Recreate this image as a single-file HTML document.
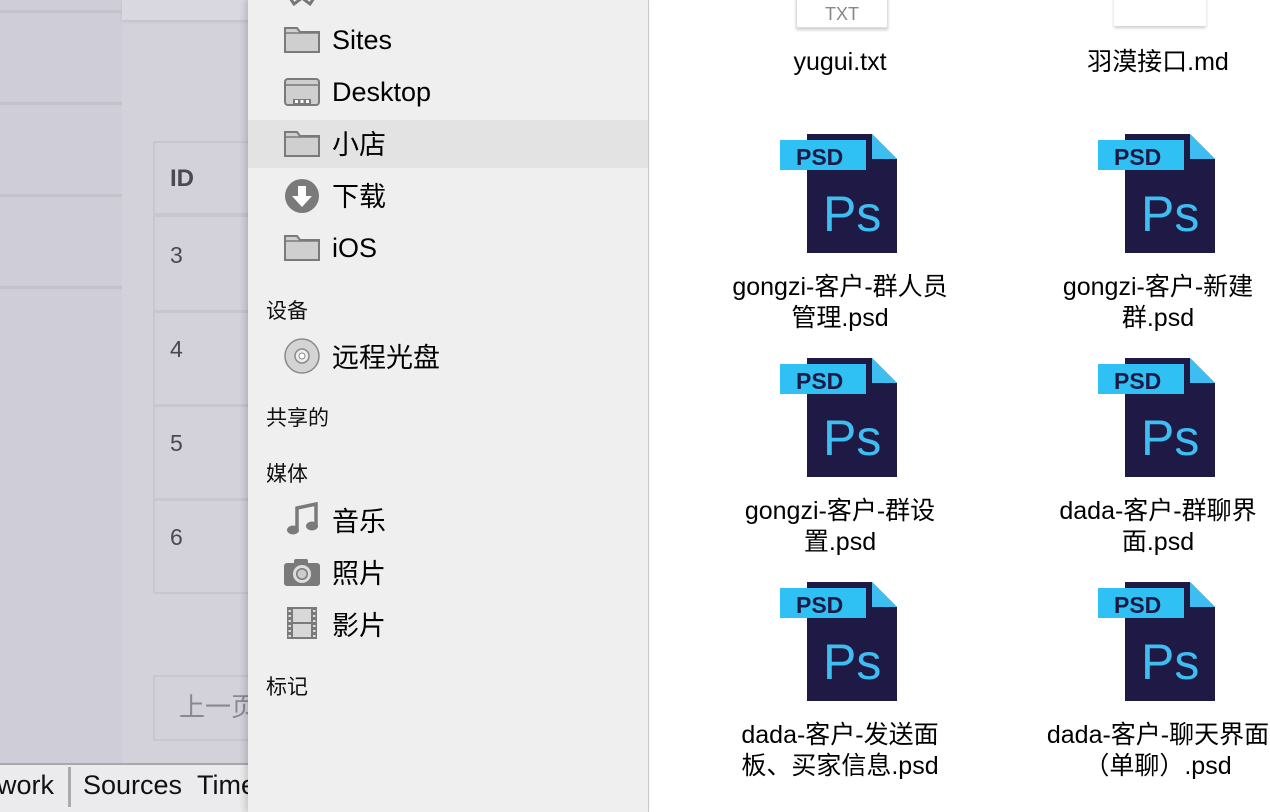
<!DOCTYPE html>
<html><head><meta charset="utf-8"><style>
*{margin:0;padding:0;box-sizing:border-box}
body{width:1270px;height:812px;overflow:hidden;position:relative;background:#fff;font-family:"Liberation Sans","Noto Sans CJK SC",sans-serif}
.a{position:absolute}
.hl{position:absolute;left:0;width:122px;height:3px;background:#c4c2cb}
.side{left:248px;top:0;width:401px;height:812px;background:#efefef;border-right:1px solid #c9c9c9;box-shadow:-3px 0 6px rgba(0,0,0,.15)}
.it{position:absolute;left:84px;font-size:27px;line-height:30px;color:#000;white-space:nowrap}
.ic{position:absolute;left:36px}
.sh{position:absolute;left:18px;font-size:21px;line-height:24px;color:#111}
.lab{position:absolute;width:300px;text-align:center;font-size:25px;line-height:31px;color:#000}
.tr{position:absolute;left:153px;width:100px;height:3px;background:#c8c6cf}
</style></head><body>
<div class="a" style="left:0;top:0;width:248px;height:764px;background:#d3d1da"></div>
<div class="a" style="left:0;top:0;width:122px;height:764px;background:#cfcdd7"></div>
<div class="a" style="left:122px;top:0;width:126px;height:20px;background:#d9d7e0;box-shadow:0 2px 3px rgba(0,0,0,.08)"></div>
<div class="hl" style="top:10px"></div><div class="hl" style="top:102px"></div><div class="hl" style="top:194px"></div><div class="hl" style="top:286px"></div>
<div class="a" style="left:153px;top:141px;width:100px;height:453px;border:2px solid #c8c6cf;border-right:none"></div>
<div class="a" style="left:153px;top:213px;width:100px;height:4px;background:#c8c6cf"></div>
<div class="tr" style="top:310px"></div><div class="tr" style="top:404px"></div><div class="tr" style="top:498px"></div>
<div class="a" style="left:170px;top:165px;font-size:24px;font-weight:bold;color:#4a4852">ID</div>
<div class="a" style="left:170px;top:242px;font-size:23px;color:#4a4852">3</div>
<div class="a" style="left:170px;top:336px;font-size:23px;color:#4a4852">4</div>
<div class="a" style="left:170px;top:430px;font-size:23px;color:#4a4852">5</div>
<div class="a" style="left:170px;top:524px;font-size:23px;color:#4a4852">6</div>
<div class="a" style="left:153px;top:675px;width:100px;height:66px;border:2px solid #c8c6cf;border-right:none"></div>
<div class="a" style="left:179px;top:692px;font-size:26px;line-height:30px;color:#8a8892;white-space:nowrap">上一页</div>
<div class="a" style="left:0;top:763px;width:248px;height:49px;background:#ebebed;border-top:2px solid #a8a8aa;overflow:hidden">
<div class="a" style="left:68px;top:2px;width:3px;height:40px;background:#aaa"></div>
<div class="a" style="left:-3px;top:5px;font-size:27px;color:#111;white-space:nowrap">work</div>
<div class="a" style="left:83px;top:5px;font-size:27px;color:#111;white-space:nowrap">Sources&nbsp;&nbsp;Timeline</div>
</div>
<div class="a side">
 <div class="a" style="left:0;top:120px;width:400px;height:48px;background:#e3e3e3"></div>
 <svg class="ic" style="top:-10px" width="36" height="16"><path d="M2 2 L10 14 L18 8 L26 14 L34 2" stroke="#777" stroke-width="3" fill="none"/></svg>
 <svg class="ic" style="top:24px" width="36" height="30"><path d="M1 4 h12 l3 4 h19 v20 h-34z" fill="#cfcfcf" stroke="#7a7a7a" stroke-width="2"/><line x1="1" y1="9" x2="35" y2="9" stroke="#7a7a7a" stroke-width="1.5"/></svg>
 <div class="it" style="top:25px">Sites</div>
 <svg class="ic" style="top:77px" width="36" height="30"><rect x="1" y="2" width="34" height="26" rx="3" fill="#cfcfcf" stroke="#7a7a7a" stroke-width="2"/><line x1="1" y1="8" x2="35" y2="8" stroke="#7a7a7a" stroke-width="1.5"/><rect x="9" y="22" width="18" height="5" fill="#7a7a7a"/><rect x="11" y="23" width="3" height="3" fill="#fff"/><rect x="16.5" y="23" width="3" height="3" fill="#fff"/><rect x="22" y="23" width="3" height="3" fill="#fff"/></svg>
 <div class="it" style="top:77px">Desktop</div>
 <svg class="ic" style="top:128px" width="36" height="30"><path d="M1 4 h12 l3 4 h19 v20 h-34z" fill="#cfcfcf" stroke="#7a7a7a" stroke-width="2"/><line x1="1" y1="9" x2="35" y2="9" stroke="#7a7a7a" stroke-width="1.5"/></svg>
 <div class="it" style="top:130px">小店</div>
 <svg class="ic" style="top:178px" width="36" height="36"><circle cx="18" cy="18" r="17" fill="#7a7a7a"/><path d="M14 8 h8 v10 h6 l-10 11 l-10 -11 h6z" fill="#fff"/></svg>
 <div class="it" style="top:182px">下载</div>
 <svg class="ic" style="top:232px" width="36" height="30"><path d="M1 4 h12 l3 4 h19 v20 h-34z" fill="#cfcfcf" stroke="#7a7a7a" stroke-width="2"/><line x1="1" y1="9" x2="35" y2="9" stroke="#7a7a7a" stroke-width="1.5"/></svg>
 <div class="it" style="top:233px">iOS</div>
 <div class="sh" style="top:300px">设备</div>
 <svg class="ic" style="top:338px" width="36" height="36"><circle cx="18" cy="18" r="17" fill="#d4d4d4" stroke="#8a8a8a" stroke-width="1.5"/><circle cx="18" cy="18" r="7" fill="#eee" stroke="#8a8a8a" stroke-width="1.5"/><circle cx="18" cy="18" r="3" fill="#fff" stroke="#8a8a8a"/></svg>
 <div class="it" style="top:343px">远程光盘</div>
 <div class="sh" style="top:407px">共享的</div>
 <div class="sh" style="top:463px">媒体</div>
 <svg class="ic" style="top:502px" width="36" height="36"><path d="M13 27 V6 L32 2 V23" stroke="#7a7a7a" stroke-width="3.5" fill="none"/><ellipse cx="9" cy="28" rx="6" ry="4.5" fill="#7a7a7a"/><ellipse cx="28" cy="24" rx="6" ry="4.5" fill="#7a7a7a"/></svg>
 <div class="it" style="top:507px">音乐</div>
 <svg class="ic" style="top:558px" width="36" height="30"><rect x="0" y="5" width="36" height="23" rx="3" fill="#7a7a7a"/><rect x="10" y="1" width="14" height="6" rx="2" fill="#7a7a7a"/><circle cx="18" cy="16" r="9" fill="#ddd"/><circle cx="18" cy="16" r="6" fill="#7a7a7a"/><circle cx="18" cy="16" r="4.5" fill="#ccc"/></svg>
 <div class="it" style="top:559px">照片</div>
 <svg class="ic" style="top:606px" width="36" height="34"><rect x="3" y="1" width="30" height="32" fill="#7a7a7a"/><rect x="9" y="3" width="18" height="13" fill="#d8d8d8"/><rect x="9" y="18" width="18" height="13" fill="#d8d8d8"/><g fill="#ddd"><rect x="4.5" y="4" width="2.5" height="2"/><rect x="4.5" y="9" width="2.5" height="2"/><rect x="4.5" y="14" width="2.5" height="2"/><rect x="4.5" y="19" width="2.5" height="2"/><rect x="4.5" y="24" width="2.5" height="2"/><rect x="4.5" y="29" width="2.5" height="2"/><rect x="29" y="4" width="2.5" height="2"/><rect x="29" y="9" width="2.5" height="2"/><rect x="29" y="14" width="2.5" height="2"/><rect x="29" y="19" width="2.5" height="2"/><rect x="29" y="24" width="2.5" height="2"/><rect x="29" y="29" width="2.5" height="2"/></g></svg>
 <div class="it" style="top:611px">影片</div>
 <div class="sh" style="top:676px">标记</div>
</div>
<!-- files -->
<div class="a" style="left:796px;top:-4px;width:92px;height:32px;background:#fff;border:1px solid #ddd;box-shadow:0 2px 3px rgba(0,0,0,.2)"><div style="position:absolute;left:28px;top:7px;font-size:18px;color:#888">TXT</div></div>
<div class="a" style="left:1114px;top:-4px;width:92px;height:30px;background:#fff;box-shadow:0 2px 3px rgba(0,0,0,.2)"></div>
<div class="lab" style="left:690px;top:47px">yugui.txt</div>
<div class="lab" style="left:1008px;top:47px">羽漠接口.md</div>

<svg width="0" height="0" style="position:absolute"><defs><g id="psd"><path d="M27 0 H92 L117 25 V119 H27z" fill="#1f1a45"/><path d="M92 0 L117 25 H92z" fill="#3dbdf0"/><rect x="0" y="6" width="86" height="30" fill="#2fc1f3"/><text x="16" y="31" font-family="Liberation Sans" font-weight="bold" font-size="23" fill="#1f1a45">PSD</text><text x="43" y="97" font-family="Liberation Sans" font-size="50" fill="#3dbdf0">Ps</text></g></defs></svg>
<svg class="a" style="left:780px;top:134px" width="118" height="120"><use href="#psd"/></svg>
<svg class="a" style="left:1098px;top:134px" width="118" height="120"><use href="#psd"/></svg>
<svg class="a" style="left:780px;top:358px" width="118" height="120"><use href="#psd"/></svg>
<svg class="a" style="left:1098px;top:358px" width="118" height="120"><use href="#psd"/></svg>
<svg class="a" style="left:780px;top:582px" width="118" height="120"><use href="#psd"/></svg>
<svg class="a" style="left:1098px;top:582px" width="118" height="120"><use href="#psd"/></svg>
<div class="lab" style="left:690px;top:272px">gongzi-客户-群人员<br>管理.psd</div>
<div class="lab" style="left:1008px;top:272px">gongzi-客户-新建<br>群.psd</div>
<div class="lab" style="left:690px;top:496px">gongzi-客户-群设<br>置.psd</div>
<div class="lab" style="left:1008px;top:496px">dada-客户-群聊界<br>面.psd</div>
<div class="lab" style="left:690px;top:720px">dada-客户-发送面<br>板、买家信息.psd</div>
<div class="lab" style="left:1008px;top:720px">dada-客户-聊天界面<br>（单聊）.psd</div>
</body></html>
